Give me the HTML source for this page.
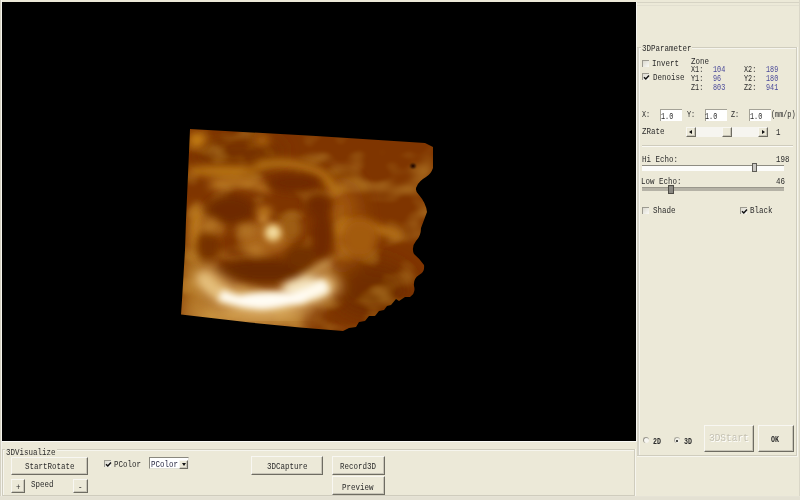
<!DOCTYPE html>
<html><head><meta charset="utf-8">
<style>
html,body{margin:0;padding:0;}
body{width:800px;height:500px;background:#ECE9D8;position:relative;overflow:hidden;font-family:"Liberation Mono",monospace;color:#222;}
.a{position:absolute;}
.t{position:absolute;line-height:10px;white-space:nowrap;transform-origin:0 0;filter:blur(0.3px);}
.L{font-size:9.5px;transform:scaleX(0.79);}
.S{font-size:8.5px;transform:scaleX(0.8);}
.B{font-size:11px;transform:scaleX(0.86);}
.SB{font-size:8.5px;font-weight:bold;transform:scaleX(0.78);}
.btn{position:absolute;box-sizing:border-box;background:#ECE9D8;border-top:1px solid #F8F7F2;border-left:1px solid #F8F7F2;border-right:1px solid #6E6C62;border-bottom:1px solid #6E6C62;box-shadow:inset -1px -1px 0 #C8C5B8;}
.cb{position:absolute;box-sizing:border-box;width:7px;height:7px;background:linear-gradient(135deg,#DCDAD0,#FAFAF6);border-top:1px solid #9C9A90;border-left:1px solid #9C9A90;}
.etch{position:absolute;box-sizing:border-box;border:1px solid #C9C6B6;box-shadow:1px 1px 0 #fff, inset 1px 1px 0 #fff;}
</style></head>
<body>
<div id="w" style="position:absolute;left:0;top:0;width:800px;height:500px;">
<!-- left edge -->
<div class="a" style="left:0;top:0;width:1px;height:500px;background:#D4D1C2;"></div>
<div class="a" style="left:1px;top:0;width:1px;height:500px;background:#F4F3EC;"></div>
<!-- top lines right panel -->
<div class="a" style="left:636px;top:2px;width:164px;height:1px;background:#D6D3C4;"></div>
<div class="a" style="left:636px;top:5px;width:164px;height:1px;background:#E2DFD0;"></div>
<div class="a" style="left:799px;top:0;width:1px;height:500px;background:#DAD7C8;"></div>
<!-- black view -->
<div class="a" style="left:2px;top:2px;width:634px;height:439px;background:#000;"></div>
<div class="a" style="left:2px;top:441px;width:635px;height:1px;background:#FAFAF6;"></div>
<div class="a" style="left:636px;top:2px;width:1px;height:440px;background:#F6F5F0;"></div>
<!-- 3D volume -->
<svg class="a" style="left:0;top:0" width="636" height="441" viewBox="0 0 636 441">
<defs>
<filter id="b1" x="-50%" y="-50%" width="200%" height="200%"><feGaussianBlur stdDeviation="1"/></filter>
<filter id="b2" x="-50%" y="-50%" width="200%" height="200%"><feGaussianBlur stdDeviation="2"/></filter>
<filter id="b3" x="-50%" y="-50%" width="200%" height="200%"><feGaussianBlur stdDeviation="3"/></filter>
<filter id="b4" x="-50%" y="-50%" width="200%" height="200%"><feGaussianBlur stdDeviation="4"/></filter>
<filter id="b5" x="-50%" y="-50%" width="200%" height="200%"><feGaussianBlur stdDeviation="5"/></filter>
<filter id="b7" x="-50%" y="-50%" width="200%" height="200%"><feGaussianBlur stdDeviation="7"/></filter>
<filter id="b10" x="-50%" y="-50%" width="200%" height="200%"><feGaussianBlur stdDeviation="10"/></filter>
<filter id="tex" x="0" y="0" width="100%" height="100%">
<feTurbulence type="fractalNoise" baseFrequency="0.03 0.045" numOctaves="2" seed="11" result="n"/>
<feColorMatrix in="n" type="matrix" values="0 0 0 0 0.76  0 0 0 0 0.50  0 0 0 0 0.10  2.6 0 0 0 -1.25" result="c"/>
<feGaussianBlur in="c" stdDeviation="1.8"/>
</filter>
<filter id="e1" color-interpolation-filters="sRGB"><feGaussianBlur stdDeviation="0.5"/><feColorMatrix type="saturate" values="1.12"/></filter>
<clipPath id="vol">
<path d="M190,129 L316,136 L425,143 L433,147 L433,168 Q431,174 426,177 Q419,181 417,186 Q414,190 419,195 Q426,203 427,212 Q424,220 421,228 Q421,236 416,241 Q411,247 414,254 Q420,259 424,265 Q425,272 419,275 Q413,279 414,286 Q416,293 410,297 L405,297 L399,301 L396,299 L391,305 L387,306 L384,310 L379,311 L375,316 L369,316 L365,321 L359,322 L356,327 L349,328 L343,331 L300,327.5 L250,322.5 L181,314.5 L182,300 L185,250 L186,220 Z"/>
</clipPath>
</defs>
<g clip-path="url(#vol)" filter="url(#e1)">
<rect x="170" y="120" width="280" height="220" fill="#783606"/>
<g filter="url(#b10)">
<ellipse cx="245" cy="316" rx="68" ry="15" fill="#C89850"/>
<ellipse cx="194" cy="280" rx="12" ry="38" fill="#B48030"/>
<ellipse cx="372" cy="290" rx="40" ry="28" fill="#6A2E04"/>
<ellipse cx="238" cy="153" rx="45" ry="12" fill="#6E3006"/>
<ellipse cx="342" cy="225" rx="18" ry="45" fill="#9A5614"/>
</g>
<rect x="170" y="120" width="280" height="220" filter="url(#tex)" opacity="0.42"/>
<g filter="url(#b5)">
<ellipse cx="197" cy="140" rx="9" ry="8" fill="#C08224"/>
<ellipse cx="222" cy="171" rx="38" ry="5" fill="#BC8024"/>
<ellipse cx="262" cy="140" rx="8" ry="5" fill="#AC6C1A"/>
<path d="M256,166 Q290,158 322,174 Q332,182 336,194" stroke="#C08628" stroke-width="7" fill="none"/>
<path d="M338,205 L340,245" stroke="#A06418" stroke-width="6" fill="none"/>
<path d="M332,232 Q365,222 400,236" stroke="#B47624" stroke-width="9" fill="none"/>
<path d="M210,186 Q245,178 270,190" stroke="#C48A34" stroke-width="7" fill="none"/>
<ellipse cx="196" cy="228" rx="8" ry="25" fill="#B47828"/>
</g>
<g filter="url(#b4)">
<ellipse cx="230" cy="210" rx="24" ry="15" fill="#682C04"/>
<ellipse cx="294" cy="183" rx="27" ry="9" fill="#6A2C04"/>
<ellipse cx="318" cy="205" rx="14" ry="12" fill="#6A2C04"/>
<ellipse cx="322" cy="236" rx="11" ry="28" fill="#6A2C04"/>
<ellipse cx="265" cy="271" rx="50" ry="12" fill="#642A04"/>
<ellipse cx="208" cy="246" rx="11" ry="16" fill="#703206"/>
<ellipse cx="300" cy="257" rx="16" ry="12" fill="#6C3006"/>
</g>
<g filter="url(#b4)">
<ellipse cx="266" cy="238" rx="26" ry="17" fill="#A26420"/>
<ellipse cx="255" cy="250" rx="8" ry="5" fill="#B47A30"/>
<ellipse cx="220" cy="230" rx="6" ry="4" fill="#A86C24"/>
<ellipse cx="264" cy="212" rx="8" ry="6" fill="#B87C2C"/>
</g>
<g filter="url(#b5)">
<ellipse cx="245" cy="230" rx="10" ry="6" fill="#B07A30"/>
<ellipse cx="292" cy="228" rx="10" ry="12" fill="#9A601E"/>
<ellipse cx="210" cy="226" rx="10" ry="7" fill="#B47C30"/>
<ellipse cx="360" cy="238" rx="18" ry="20" fill="#9C5C18"/>
</g>
<g filter="url(#b3)">
<ellipse cx="273" cy="233" rx="9" ry="9" fill="#E2C07A"/>
<ellipse cx="273" cy="232" rx="4.5" ry="4.5" fill="#F4E2B0"/>
<ellipse cx="263" cy="219" rx="4" ry="3" fill="#D09848"/>
</g>
<g filter="url(#b7)">
<path d="M200,272 Q218,294 244,302 Q266,307 290,302 Q314,295 336,278" stroke="#D8B070" stroke-width="24" fill="none"/>
</g>
<g filter="url(#b4)">
<path d="M201,275 Q210,290 226,298" stroke="#E4C48A" stroke-width="9" fill="none"/>
<path d="M300,279 Q316,270 330,262" stroke="#D0A868" stroke-width="7" fill="none"/>
<ellipse cx="306" cy="289" rx="24" ry="11" fill="#F2E2C0"/>
</g>
<g filter="url(#b3)">
<path d="M220,295 Q240,303 262,304 Q292,302 326,285" stroke="#FFFBF0" stroke-width="11" fill="none"/>
<ellipse cx="272" cy="299" rx="36" ry="7" fill="#FFFCF4"/>
</g>
<g filter="url(#b1)">
<ellipse cx="413" cy="166" rx="2.5" ry="2" fill="#0A0200"/>
<ellipse cx="366" cy="324" rx="3" ry="2" fill="#000"/>
<ellipse cx="377" cy="318" rx="2" ry="1.5" fill="#000"/>
</g>
</g>
</svg>
<!-- right group -->
<div class="a" style="left:637px;top:47px;width:2px;height:409px;background:#D6D4C8;"></div>
<div class="a" style="left:639px;top:47px;width:1px;height:408px;background:#F4F3EC;"></div>
<div class="a" style="left:637px;top:47px;width:160px;height:1px;background:#D0CDBE;"></div>
<div class="a" style="left:639px;top:48px;width:157px;height:1px;background:#F6F5EE;"></div>
<div class="a" style="left:796px;top:47px;width:1px;height:409px;background:#D0CDBE;"></div>
<div class="a" style="left:797px;top:47px;width:1px;height:410px;background:#F6F5EE;"></div>
<div class="a" style="left:637px;top:455px;width:160px;height:1px;background:#D0CDBE;"></div>
<div class="a" style="left:637px;top:456px;width:161px;height:1px;background:#F6F5EE;"></div>
<div class="a" style="left:641px;top:43px;width:51px;height:8px;background:#ECE9D8;"></div>
<div class="cb" style="left:642px;top:59.5px;"></div>
<div class="cb" style="left:642px;top:73px;"><svg width="7" height="7" style="position:absolute;left:0;top:0"><path d="M1,3.2 L2.8,5 L6,1.6" stroke="#111" stroke-width="1.5" fill="none"/></svg></div>
<!-- textboxes -->
<div class="a" style="left:660px;top:109px;width:22px;height:12px;box-sizing:border-box;background:#fff;border-top:1px solid #A4A297;border-left:1px solid #A4A297;"></div>
<div class="a" style="left:704.5px;top:109px;width:22px;height:12px;box-sizing:border-box;background:#fff;border-top:1px solid #A4A297;border-left:1px solid #A4A297;"></div>
<div class="a" style="left:749px;top:109px;width:22px;height:12px;box-sizing:border-box;background:#fff;border-top:1px solid #A4A297;border-left:1px solid #A4A297;"></div>
<!-- scrollbar -->
<div class="a" style="left:686px;top:127px;width:81px;height:10px;background:#F6F5F0;"></div>
<div class="btn" style="left:686px;top:127px;width:10px;height:10px;"></div>
<div class="a" style="left:689px;top:130px;width:0;height:0;border-top:2px solid transparent;border-bottom:2px solid transparent;border-right:3px solid #111;"></div>
<div class="btn" style="left:757.5px;top:127px;width:10px;height:10px;"></div>
<div class="a" style="left:762px;top:130px;width:0;height:0;border-top:2px solid transparent;border-bottom:2px solid transparent;border-left:3px solid #111;"></div>
<div class="btn" style="left:721.5px;top:127px;width:10px;height:10px;"></div>
<!-- separator -->
<div class="a" style="left:641.5px;top:145px;width:151px;height:1px;background:#CFCCBD;"></div>
<div class="a" style="left:641.5px;top:146px;width:151px;height:1px;background:#FAF9F4;"></div>
<!-- sliders -->
<div class="a" style="left:642px;top:165px;width:142px;height:6px;box-sizing:border-box;background:#FCFCFA;border-top:1px solid #8E8C82;"></div>
<div class="a" style="left:752px;top:163px;width:5px;height:9px;box-sizing:border-box;background:#C9C7C2;border:1px solid #5E5C56;"></div>
<div class="a" style="left:642px;top:187px;width:142px;height:4px;box-sizing:border-box;background:#B5B2A6;border-top:1px solid #9A978C;"></div>
<div class="a" style="left:667.5px;top:185px;width:6px;height:9px;box-sizing:border-box;background:#8A8882;border:1px solid #4E4C46;"></div>
<div class="cb" style="left:642px;top:207px;"></div>
<div class="cb" style="left:740px;top:207px;"><svg width="7" height="7" style="position:absolute;left:0;top:0"><path d="M1,3.2 L2.8,5 L6,1.6" stroke="#111" stroke-width="1.5" fill="none"/></svg></div>
<!-- radios -->
<div class="a" style="left:643px;top:437px;width:6px;height:6px;border-radius:50%;box-sizing:border-box;background:#F6F5F0;border-top:1px solid #9A988E;border-left:1px solid #9A988E;"></div>
<div class="a" style="left:673.5px;top:437px;width:6px;height:6px;border-radius:50%;box-sizing:border-box;background:#F2F1EA;border-top:1px solid #AAA89E;border-left:1px solid #AAA89E;"></div>
<div class="a" style="left:676px;top:439.5px;width:2px;height:2px;background:#111;border-radius:50%;"></div>
<div class="btn" style="left:704px;top:425px;width:50px;height:27px;"></div>
<div class="btn" style="left:758px;top:425px;width:36px;height:27px;"></div>
<!-- bottom group -->
<div class="a" style="left:2px;top:449px;width:633px;height:1px;background:#D0CDBE;"></div>
<div class="a" style="left:3px;top:450px;width:631px;height:1px;background:#F6F5EE;"></div>
<div class="a" style="left:2px;top:449px;width:1px;height:47px;background:#CFCCBD;"></div>
<div class="a" style="left:3px;top:450px;width:1px;height:45px;background:#F6F5EE;"></div>
<div class="a" style="left:634px;top:449px;width:1px;height:47px;background:#CFCCBD;"></div>
<div class="a" style="left:635px;top:449px;width:1px;height:48px;background:#F6F5EE;"></div>
<div class="a" style="left:2px;top:495px;width:633px;height:1px;background:#CFCCBD;"></div>
<div class="a" style="left:5px;top:446px;width:52px;height:8px;background:#ECE9D8;"></div>
<div class="btn" style="left:11px;top:456.5px;width:76.5px;height:18px;"></div>
<div class="btn" style="left:11px;top:478.5px;width:14px;height:14.5px;"></div>
<div class="btn" style="left:72.5px;top:479px;width:15px;height:14px;"></div>
<div class="cb" style="left:104px;top:459.5px;"><svg width="7" height="7" style="position:absolute;left:0;top:0"><path d="M1,3.2 L2.8,5 L6,1.6" stroke="#111" stroke-width="1.5" fill="none"/></svg></div>
<div class="a" style="left:148.5px;top:457px;width:40px;height:12px;box-sizing:border-box;background:#fff;border-top:1px solid #8A887E;border-left:1px solid #8A887E;border-right:1px solid #E4E2D8;border-bottom:1px solid #E4E2D8;"></div>
<div class="btn" style="left:178.5px;top:460px;width:9px;height:8.5px;"></div>
<div class="a" style="left:181.5px;top:463px;width:0;height:0;border-left:2px solid transparent;border-right:2px solid transparent;border-top:3px solid #111;"></div>
<div class="btn" style="left:251px;top:456px;width:72px;height:18.5px;"></div>
<div class="btn" style="left:331.5px;top:456px;width:53px;height:18.5px;"></div>
<div class="btn" style="left:331.5px;top:476px;width:53px;height:18.5px;"></div>
<!-- bottom strip -->
<div class="a" style="left:0;top:496px;width:800px;height:1px;background:#E6E3D6;"></div>
<div class="a" style="left:0;top:497px;width:800px;height:3px;background:#E4E1D3;"></div>
<div class="t L" style="left:641.5px;top:43.8px;color:#2a2a2a;">3DParameter</div>
<div class="t L" style="left:652.2px;top:59.0px;color:#2a2a2a;">Invert</div>
<div class="t L" style="left:653.2px;top:73.4px;color:#2a2a2a;">Denoise</div>
<div class="t L" style="left:691.0px;top:56.8px;color:#2a2a2a;">Zone</div>
<div class="t S" style="left:691.0px;top:64.8px;color:#2a2a2a;">X1:</div>
<div class="t S" style="left:691.0px;top:74.1px;color:#2a2a2a;">Y1:</div>
<div class="t S" style="left:691.0px;top:83.0px;color:#2a2a2a;">Z1:</div>
<div class="t S" style="left:712.5px;top:64.8px;color:#4a4a9a;">104</div>
<div class="t S" style="left:712.5px;top:74.1px;color:#4a4a9a;">96</div>
<div class="t S" style="left:712.5px;top:83.0px;color:#4a4a9a;">803</div>
<div class="t S" style="left:744.0px;top:64.8px;color:#2a2a2a;">X2:</div>
<div class="t S" style="left:744.0px;top:74.1px;color:#2a2a2a;">Y2:</div>
<div class="t S" style="left:744.0px;top:83.0px;color:#2a2a2a;">Z2:</div>
<div class="t S" style="left:766.0px;top:64.8px;color:#4a4a9a;">189</div>
<div class="t S" style="left:766.0px;top:74.1px;color:#4a4a9a;">180</div>
<div class="t S" style="left:766.0px;top:83.0px;color:#4a4a9a;">941</div>
<div class="t S" style="left:642.0px;top:109.8px;color:#2a2a2a;">X:</div>
<div class="t S" style="left:687.0px;top:109.8px;color:#2a2a2a;">Y:</div>
<div class="t S" style="left:731.0px;top:109.8px;color:#2a2a2a;">Z:</div>
<div class="t S" style="left:771.0px;top:110.3px;color:#2a2a2a;">(mm/p)</div>
<div class="t S" style="left:660.5px;top:111.5px;color:#2a2a2a;">1.0</div>
<div class="t S" style="left:705.0px;top:111.5px;color:#2a2a2a;">1.0</div>
<div class="t S" style="left:750.0px;top:111.5px;color:#2a2a2a;">1.0</div>
<div class="t L" style="left:642.0px;top:127.0px;color:#2a2a2a;">ZRate</div>
<div class="t L" style="left:776.0px;top:128.0px;color:#2a2a2a;">1</div>
<div class="t L" style="left:642.2px;top:155.0px;color:#2a2a2a;">Hi Echo:</div>
<div class="t L" style="left:776.0px;top:155.0px;color:#2a2a2a;">198</div>
<div class="t L" style="left:641.2px;top:177.2px;color:#2a2a2a;">Low Echo:</div>
<div class="t L" style="left:776.0px;top:177.0px;color:#2a2a2a;">46</div>
<div class="t L" style="left:653.0px;top:205.8px;color:#2a2a2a;">Shade</div>
<div class="t L" style="left:749.5px;top:205.8px;color:#2a2a2a;">Black</div>
<div class="t SB" style="left:653.0px;top:436.8px;color:#2a2a2a;">2D</div>
<div class="t SB" style="left:683.8px;top:436.8px;color:#2a2a2a;">3D</div>
<div class="t B" style="left:709.0px;top:433.0px;color:#C4C1B2;text-shadow:1px 1px 0 #fff;">3DStart</div>
<div class="t SB" style="left:771.3px;top:435.3px;color:#2a2a2a;">OK</div>
<div class="t L" style="left:6.0px;top:447.5px;color:#2a2a2a;">3DVisualize</div>
<div class="t L" style="left:24.8px;top:462.1px;color:#2a2a2a;">StartRotate</div>
<div class="t L" style="left:16.0px;top:482.8px;color:#2a2a2a;">+</div>
<div class="t L" style="left:31.0px;top:479.8px;color:#2a2a2a;">Speed</div>
<div class="t L" style="left:78.0px;top:482.6px;color:#2a2a2a;">-</div>
<div class="t L" style="left:114.0px;top:460.0px;color:#2a2a2a;">PColor</div>
<div class="t L" style="left:150.5px;top:460.0px;color:#2a2a44;">PColor</div>
<div class="t L" style="left:266.5px;top:462.0px;color:#2a2a2a;">3DCapture</div>
<div class="t L" style="left:340.4px;top:462.3px;color:#2a2a2a;">Record3D</div>
<div class="t L" style="left:342.0px;top:482.7px;color:#2a2a2a;">Preview</div>
</div>
</body></html>
